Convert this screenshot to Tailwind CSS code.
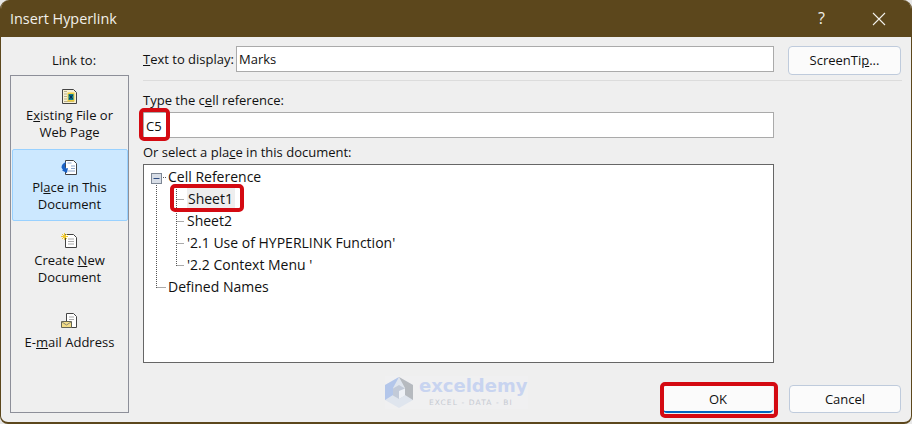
<!doctype html>
<html lang="en">
<head>
    <meta charset="UTF-8">
    <title>Insert Hyperlink</title>
    <script src="https://cdn.jsdelivr.net/npm/@tailwindcss/browser@4"></script>
</head>
<body class="bg-[#e8e8e8]">
<div class="relative w-[912px] h-[424px] overflow-hidden flex flex-col bg-[#efefef] text-[13px] leading-[17px] text-[#111] font-['Open_Sans','Noto_Sans',sans-serif] rounded-t-[9px] rounded-b-[8px] border-b-2 border-l border-r border-[#5c471c]">
    <!-- title bar -->
    <div class="h-[37px] shrink-0 bg-[#5c471c] text-[#f2f0ea] flex items-center pl-[9px] pr-[25px] text-[14.4px]">
        <span class="flex-1">Insert Hyperlink</span>
        <span class="mr-[47px] text-[16px]">?</span>
        <svg width="14" height="14" viewBox="0 0 14 14" fill="none" stroke="#f2f0ea" stroke-width="1.1"><path d="M1 1l12 12M13 1L1 13"/></svg>
    </div>

    <div class="flex flex-1">
        <!-- left nav -->
        <div class="w-[128px] ml-[9px] shrink-0">
            <div class="h-[38px] pt-[15px] text-center">Link to:</div>
            <div class="h-[338px] w-[119px] border border-[#8d8f99] flex flex-col items-center p-px">
                <div class="h-[72px] pt-[11px] w-full flex flex-col items-center text-center">
                    <svg width="17" height="17" viewBox="0 0 17 17"><path d="M1.500 1.500h11l3 3v11h-14z" fill="#f6f0d6" stroke="#444"/><path d="M3 3h3v1H3zM3 5.500h3v1H3zM3 8h3v1H3zM3 10.500h3v1H3zM3 13h10v1H3z" fill="#b9b08a"/><path d="M6.500 4.500h7v9h-7z" fill="#f1cf3c"/><path d="M7.500 6h5v6h-5z" fill="#0e7f8f"/><path d="M8.500 7l3 4M11.500 7l-3 4" stroke="#08264f"/></svg>
                    <div class="mt-[2px] leading-[17px]">E<u>x</u>isting File or<br>Web Page</div>
                </div>
                <div class="h-[72px] w-[116px] pt-[9px] flex flex-col items-center text-center bg-[#cce8ff] border border-[#99d1ff] rounded-[2px]">
                    <svg width="17" height="17" viewBox="0 0 17 17"><path d="M4.500 1.500h8l3 3v11h-11z" fill="#fff" stroke="#444"/><path d="M6.500 4h4M10 7h4M10 9.500h4M7 12h7" stroke="#8fa8cc"/><path d="M5 3C2 4 .500 6 .500 8.500L2 11l-1 .5 5 2.500 1-5-1.500.5L4 8c0-2 .500-3 1-5z" fill="#1a62c6"/></svg>
                    <div class="mt-[3px]">Pl<u>a</u>ce in This<br>Document</div>
                </div>
                <div class="h-[82px] pt-[11px] w-full flex flex-col items-center text-center">
                    <svg width="17" height="17" viewBox="0 0 17 17"><path d="M4.500 2.500h8l3 3v10h-11z" fill="#fff" stroke="#444"/><path d="M7 7h6M7 9.500h6M7 12h6" stroke="#aaa"/><path d="M1 2l5 5M6 2L1 7M3.500 1v7M0 4.500h7" stroke="#f1c92c"/></svg>
                    <div class="mt-[3px]">Create <u>N</u>ew<br>Document</div>
                </div>
                <div class="pt-[9px] w-full flex flex-col items-center text-center">
                    <svg width="17" height="17" viewBox="0 0 17 17"><path d="M5.500 1.500h7l3 3v11h-10z" fill="#fff" stroke="#444"/><path d="M8 5h5M8 7.500h5" stroke="#aaa"/><path d="M.500 9.500h10v6H.500z" fill="#f4dd86" stroke="#665"/><path d="M1 10l4.500 3 4.500-3" fill="none" stroke="#887"/></svg>
                    <div class="mt-[5px]">E-<u>m</u>ail Address</div>
                </div>
            </div>
        </div>

        <!-- right side -->
        <div class="w-[760px] ml-[5px] pt-[9px]">
            <div class="flex items-start">
                <label class="w-[93px] pt-[5px]"><u>T</u>ext to display:</label>
                <div class="w-[538px] h-[26px] bg-white border border-[#aaa] pl-[2px] pt-[4px]">Marks</div>
                <button class="ml-[14px] w-[113px] h-[29px] bg-[#fbfbfb] border border-[#bfcbdc] rounded-[4px] text-center">ScreenTi<u>p</u>...</button>
            </div>
            <div class="h-px bg-[#dcdcdc] mt-[5px] w-[759px]"></div>
            <div class="mt-[11px]">Type the c<u>e</u>ll reference:</div>
            <div class="w-[631px] h-[26px] mt-[3px] bg-white border border-[#aaa] pl-[2px] pt-[5px]">C5</div>
            <div class="mt-[6px]">Or select a pla<u>c</u>e in this document:</div>
            <div class="relative w-[631px] h-[199px] mt-[3px] bg-white border border-[#666] text-[14px] leading-[22px] pl-[24px] pt-[1px]">
                <svg class="absolute left-0 top-0" width="60" height="130" fill="none" stroke="#555" stroke-dasharray="1 1">
                    <path d="M12.500 18v105M12.500 122.500h10M32.500 24v77M32.500 34.500h8M32.500 56.500h8M32.500 78.500h8M32.500 100.500h8M17 12.500h5"/>
                    <rect x="7.500" y="8.500" width="10" height="10" fill="#d7dde6" stroke="#7d8795" stroke-dasharray="none"/>
                    <path d="M9.500 13.500h6" stroke="#2c4a80" stroke-dasharray="none"/>
                </svg>
                <div>Cell Reference</div>
                <div class="pl-[19px]"><span class="bg-[#eeeeee] pl-px pr-[2px] inline-block">Sheet1</span></div>
                <div class="pl-[19px]">Sheet2</div>
                <div class="pl-[19px]">'2.1 Use of HYPERLINK Function'</div>
                <div class="pl-[19px]">'2.2 Context Menu '</div>
                <div>Defined Names</div>
            </div>
            <div class="flex items-start mt-[23px] pl-[520px]">
                <button class="w-[110px] h-[27px] bg-[#fbfbfb] border-b-2 border-[#0067c0] rounded-[4px] text-center pt-[1px]">OK</button>
                <button class="ml-[16px] w-[112px] h-[28px] -mt-px bg-[#fbfbfb] border border-[#bfcbdc] rounded-[4px] text-center">Cancel</button>
            </div>
        </div>
    </div>

    <!-- red callouts drawn on top of the dialog -->
    <div class="absolute left-[138px] top-[108px] w-[31px] h-[33px] border-[4px] border-[#d40a12] rounded-[5px]"></div>
    <div class="absolute left-[169px] top-[184px] w-[74px] h-[28px] border-[4px] border-[#d40a12] rounded-[5px]"></div>
    <div class="absolute left-[659px] top-[382px] w-[118px] h-[36px] border-[4px] border-[#d40a12] rounded-[5px]"></div>

    <!-- watermark -->
    <div class="absolute left-[384px] top-[376px] w-[143px] h-[33px] flex bg-[#f0f0f1]">
        <svg class="shrink-0" width="28" height="33" viewBox="0 0 28 33"><path d="M14 1l14 8v15l-14 8L0 24V9z" fill="#dfe5ee"/><path d="M14 1L0 9v15l8-5V12z" fill="#b3c6ea"/><path d="M14 1l14 8v15l-8-5v-7z" fill="#b6babf"/><path d="M14 9l6 3.500v7L14 23l-6-3.500v-7z" fill="#c2cad8"/><path d="M14 15l6-2.500v7L14 23z" fill="#eef1f6"/></svg>
        <div class="ml-[6px] -mt-[2px] font-['DejaVu_Sans',sans-serif] font-bold whitespace-nowrap">
            <div class="text-[18px] leading-[24px] text-[#c8d4f0]">exceldemy</div>
            <div class="text-[7.500px] leading-[9px] ml-[10px] text-[#c6cad1] tracking-[1.100px] font-normal">EXCEL - DATA - BI</div>
        </div>
    </div>
</div>
</body>
</html>
